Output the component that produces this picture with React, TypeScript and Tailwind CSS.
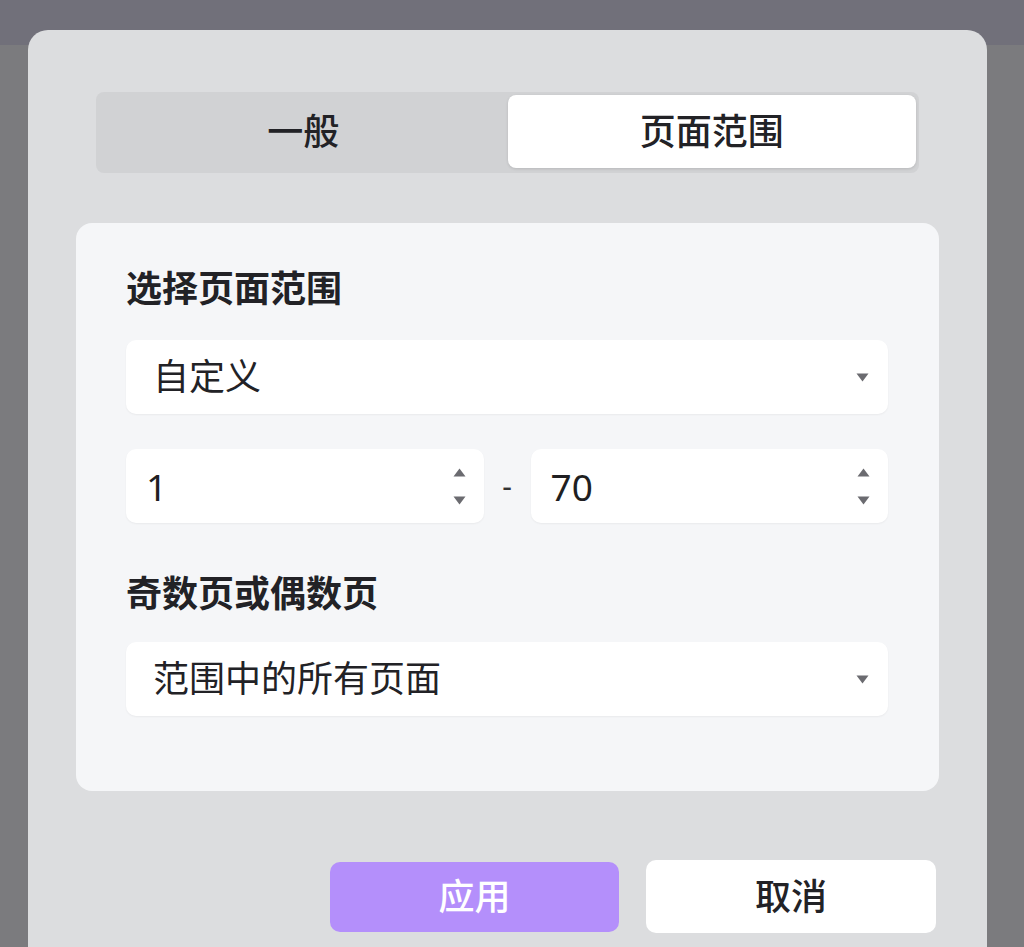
import { useState } from "react";

const font = "font-['Noto_Sans','Noto_Sans_CJK_SC',sans-serif]";

function Caret({ up = false }: { up?: boolean }) {
  return (
    <svg width="13" height="9" viewBox="0 0 13 9" className="block">
      {up ? (
        <path d="M6.5 0.5 L12.5 8.5 L0.5 8.5 Z" fill="#6b6b70" />
      ) : (
        <path d="M0.5 0.5 L12.5 0.5 L6.5 8.5 Z" fill="#6b6b70" />
      )}
    </svg>
  );
}

function SelectBox({ value }: { value: string }) {
  return (
    <div className="flex h-[74px] items-center justify-between rounded-[10px] bg-white pl-[27px] pr-[19px] shadow-[0_1px_2px_rgba(0,0,0,0.05)]">
      <span className="text-[36px] leading-none text-[#222226]">{value}</span>
      <Caret />
    </div>
  );
}

function NumberBox({ value }: { value: string }) {
  return (
    <div className="flex h-[74px] flex-1 items-center justify-between rounded-[10px] bg-white pl-[20px] pr-[18px] shadow-[0_1px_2px_rgba(0,0,0,0.05)]">
      <span className="text-[37px] leading-none text-[#1f1f22]">{value}</span>
      <div className="flex flex-col gap-[19px]">
        <Caret up />
        <Caret />
      </div>
    </div>
  );
}

export default function App() {
  const [tab, setTab] = useState(1);

  return (
    <div className={`relative h-[947px] w-[1024px] overflow-hidden bg-[#7b7b7e] ${font}`}>
      <div className="h-[45px] bg-[#71707a]" />

      <div className="absolute left-[28px] top-[30px] h-[960px] w-[959px] rounded-[20px] bg-[#dcdddf] px-[48px] pt-[62px]">
        <div className="mx-[20px] grid h-[81px] grid-cols-2 rounded-[8px] bg-[#d1d2d4] px-[3px] pb-[5px] pt-[3px]">
          {["一般", "页面范围"].map((label, i) => (
            <button
              key={label}
              onClick={() => setTab(i)}
              className={`flex items-center justify-center rounded-[8px] text-[36px] font-medium leading-none text-[#222226] ${
                tab === i ? "bg-white shadow-[0_1px_3px_rgba(0,0,0,0.12)]" : ""
              }`}
            >
              {label}
            </button>
          ))}
        </div>

        <div className="mt-[50px] rounded-[16px] bg-[#f5f6f8] pb-[75px] pl-[50px] pr-[51px] pt-[45px]">
          <h3 className="text-[36px] font-bold leading-[42px] text-[#222226]">选择页面范围</h3>
          <div className="mt-[30px]">
            <SelectBox value="自定义" />
          </div>

          <div className="mt-[35px] flex items-center gap-[18px]">
            <NumberBox value="1" />
            <span className="w-[11px] text-center text-[30px] leading-none text-[#333]">-</span>
            <NumberBox value="70" />
          </div>

          <h3 className="mt-[50px] text-[36px] font-bold leading-[42px] text-[#222226]">奇数页或偶数页</h3>
          <div className="mt-[27px]">
            <SelectBox value="范围中的所有页面" />
          </div>
        </div>

        <div className="mr-[3px] mt-[69px] flex items-center justify-end gap-[27px]">
          <button className="flex h-[70px] w-[289px] items-center justify-center rounded-[10px] bg-[#b48ffb] text-[36px] font-medium leading-none text-white">
            应用
          </button>
          <button className="flex h-[73px] w-[290px] items-center justify-center rounded-[10px] bg-white text-[36px] font-medium leading-none text-[#222226]">
            取消
          </button>
        </div>
      </div>
    </div>
  );
}
